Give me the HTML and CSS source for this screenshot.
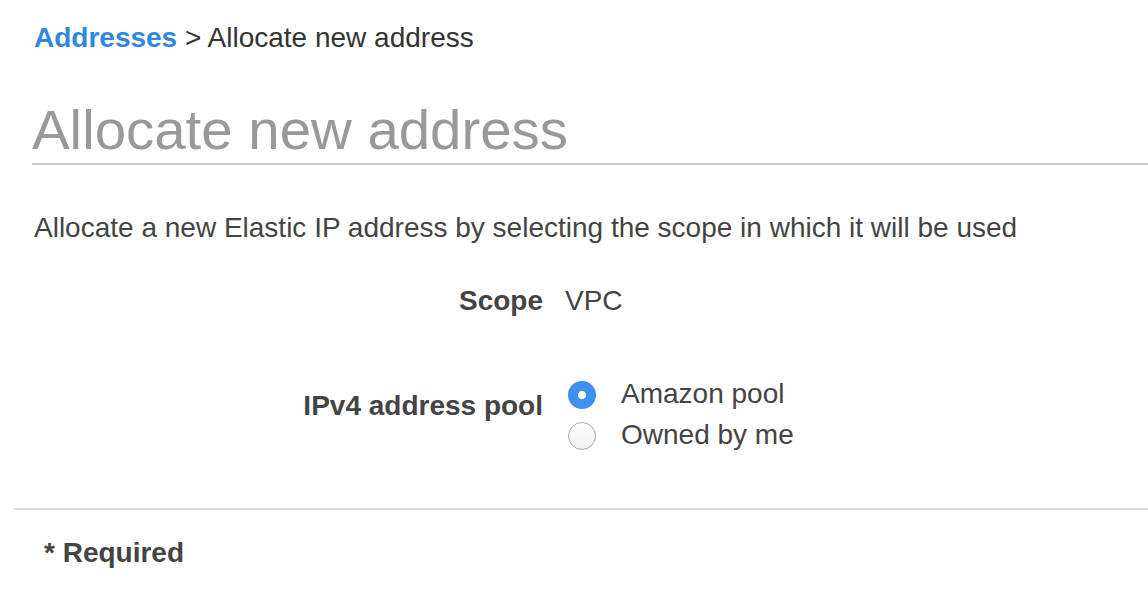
FILE: index.html
```html
<!DOCTYPE html>
<html lang="en">
<head>
    <meta charset="UTF-8">
    <meta name="viewport" content="width=device-width, initial-scale=1.0">
    <title>Allocate new address</title>
    <link rel="stylesheet" href="styles.css">
</head>
<body>

    <div class="breadcrumb">
        <a href="#" class="crumb-link">Addresses</a> &gt; Allocate new address
    </div>

    <h1 class="page-title">Allocate new address</h1>

    <p class="intro">Allocate a new Elastic IP address by selecting the scope in which it will be used</p>

    <div class="form-row scope-row">
        <div class="form-label">Scope</div>
        <div class="form-value">VPC</div>
    </div>

    <div class="form-row pool-row">
        <div class="form-label pool-label">IPv4 address pool</div>
        <div class="radio-group">
            <label class="radio-option">
                <input type="radio" name="pool" value="amazon" checked>
                <span>Amazon pool</span>
            </label>
            <label class="radio-option">
                <input type="radio" name="pool" value="byoip">
                <span>Owned by me</span>
            </label>
        </div>
    </div>

    <div class="footer">
        <span class="required">* Required</span>
    </div>

</body>
</html>
```

FILE: styles.css
```css
body {
    font-family: "Liberation Sans", Arial, sans-serif;
    font-size: 28px;
    line-height: 31px;
    margin: 0;
    color: #444444;
    background-color: #ffffff;
}
.breadcrumb {
    padding: 22px 0 0 34px;
    color: #333333;
}
.crumb-link {
    color: #2e88e2;
    font-weight: bold;
    text-decoration: none;
}
.page-title {
    margin: 43px 0 0 32px;
    font-size: 56.4px;
    line-height: 67px;
    font-weight: normal;
    color: #999999;
    border-bottom: 2px solid #cccccc;
}
.intro {
    margin: 47px 0 0 34px;
}
.form-row {
    display: grid;
    grid-template-columns: 543px 1fr;
    column-gap: 22px;
    align-items: start;
}
.scope-row {
    margin-top: 42px;
}
.pool-row {
    margin-top: 61px;
}
.form-label {
    text-align: right;
    font-weight: bold;
}
.pool-label {
    padding-top: 13px;
}
.radio-group {
    display: flex;
    flex-direction: column;
    gap: 9px;
}
.radio-option {
    display: flex;
    align-items: center;
    gap: 25px;
    margin-left: 3px;
}
.radio-option input {
    appearance: none;
    -webkit-appearance: none;
    margin: 4px 0 0 0;
    width: 28px;
    height: 28px;
    border-radius: 50%;
    border: 1px solid #a9a9a9;
    background: linear-gradient(#ffffff, #f1f1f1);
    box-sizing: border-box;
}
.radio-option input:checked {
    border: 10px solid #3d8ff0;
    background: #ffffff;
}
.footer {
    margin: 58px 0 0 14px;
    border-top: 2px solid #dddddd;
    padding: 27px 0 0 30px;
}
.required {
    font-weight: bold;
}
```
